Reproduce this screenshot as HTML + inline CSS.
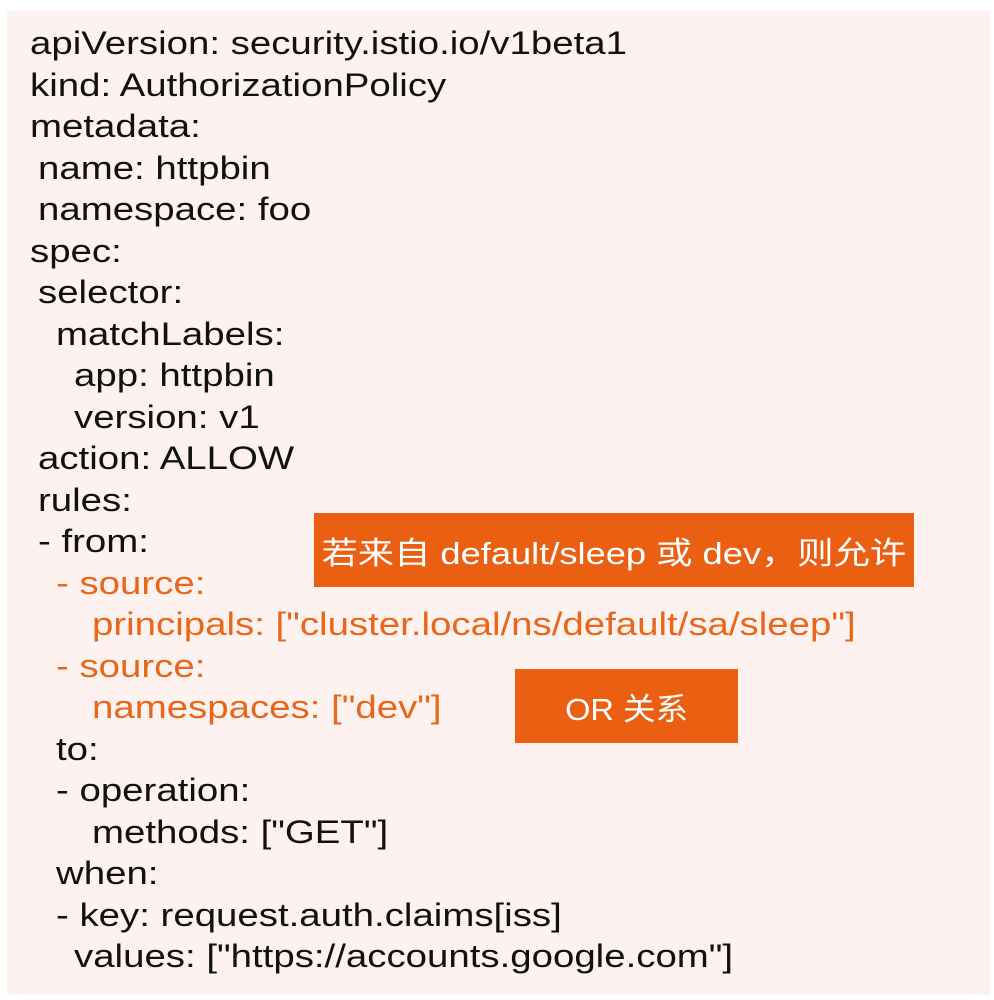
<!DOCTYPE html>
<html><head><meta charset="utf-8"><style>
html,body{margin:0;padding:0;background:#fff;width:994px;height:1000px;overflow:hidden}
.box{position:absolute;left:7px;top:11px;width:983px;height:984px;background:#fdf2ef}
.l{position:absolute;white-space:pre;font-family:"Liberation Sans","Noto Sans CJK SC",sans-serif;font-size:32px;line-height:41.5px;color:#111;transform:scaleX(1.2);transform-origin:0 0}
.o{color:#e8671a}
.tag{position:absolute;background:#ea5f12;color:#fff;font-family:"Liberation Sans","Noto Sans CJK SC",sans-serif;font-size:31px;display:flex;align-items:center;justify-content:center}
</style></head><body>
<div class="box"></div>
<div class="l" style="left:30px;top:23px">apiVersion: security.istio.io/v1beta1</div>
<div class="l" style="left:30px;top:64.5px">kind: AuthorizationPolicy</div>
<div class="l" style="left:30px;top:106px">metadata:</div>
<div class="l" style="left:38px;top:147.5px">name: httpbin</div>
<div class="l" style="left:38px;top:189px">namespace: foo</div>
<div class="l" style="left:30px;top:230.5px">spec:</div>
<div class="l" style="left:38px;top:272px">selector:</div>
<div class="l" style="left:56px;top:313.5px">matchLabels:</div>
<div class="l" style="left:74px;top:355px">app: httpbin</div>
<div class="l" style="left:74px;top:396.5px">version: v1</div>
<div class="l" style="left:38px;top:438px">action: ALLOW</div>
<div class="l" style="left:38px;top:479.5px">rules:</div>
<div class="l" style="left:38px;top:521px">- from:</div>
<div class="l o" style="left:56px;top:562.5px">- source:</div>
<div class="l o" style="left:92px;top:604px">principals: ["cluster.local/ns/default/sa/sleep"]</div>
<div class="l o" style="left:56px;top:645.5px">- source:</div>
<div class="l o" style="left:92px;top:687px">namespaces: ["dev"]</div>
<div class="l" style="left:56px;top:728.5px">to:</div>
<div class="l" style="left:56px;top:770px">- operation:</div>
<div class="l" style="left:92px;top:811.5px">methods: ["GET"]</div>
<div class="l" style="left:56px;top:853px">when:</div>
<div class="l" style="left:56px;top:894.5px">- key: request.auth.claims[iss]</div>
<div class="l" style="left:74px;top:936px">values: ["https://accounts.google.com"]</div>
<div class="tag" style="left:314px;top:513px;width:600px;height:74px"><span style="display:inline-block;transform:scaleX(1.17)">若来自 default/sleep 或 dev，则允许</span></div>
<div class="tag" style="left:515px;top:669px;width:223px;height:74px"><span style="display:inline-block;transform:scaleX(1.05)">OR 关系</span></div>
</body></html>
